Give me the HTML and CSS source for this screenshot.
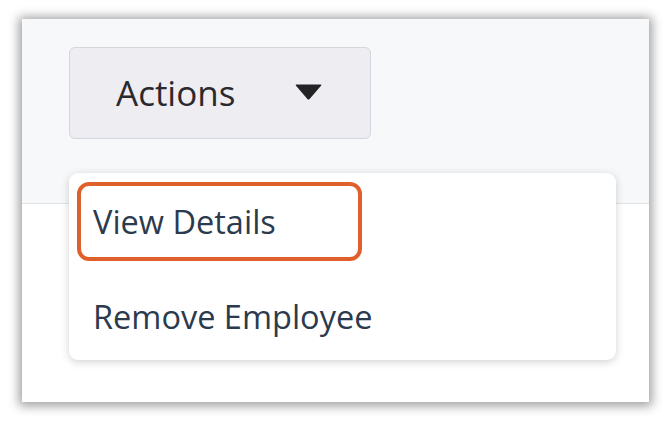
FILE: index.html
```html
<!DOCTYPE html>
<html>
<head>
<meta charset="utf-8">
<link rel="stylesheet" href="styles.css">
</head>
<body>
<div class="frame">
  <div class="header">
    <button class="actions">
      <span class="label">Actions</span>
      <svg class="caret" width="27" height="16" viewBox="0 0 27 16"><path d="M1.5 0.5 H25.5 Q27 0.5 26 1.8 L14.6 15 Q13.5 16 12.4 15 L1 1.8 Q0 0.5 1.5 0.5 Z" fill="#232326"/></svg>
    </button>
  </div>
  <div class="body"></div>
  <div class="menu">
    <div class="item selected">View Details</div>
    <div class="item">Remove Employee</div>
  </div>
</div>
</body>
</html>
```
FILE: styles.css
```css
html, body {
  margin: 0;
  padding: 0;
  background: #ffffff;
}
body {
  width: 668px;
  height: 424px;
  overflow: hidden;
  font-family: "Open Sans", "Noto Sans", sans-serif;
}
.frame {
  position: relative;
  margin: 19px 0 0 22px;
  width: 627px;
  height: 383px;
  background: #ffffff;
  box-shadow: 0 1px 10px 3px rgba(0, 0, 0, 0.38);
  overflow: visible;
}
.header {
  height: 185px;
  background: #f7f8fa;
  border-bottom: 1px solid #e1e3e7;
  padding: 28px 0 0 47px;
  box-sizing: border-box;
}
.actions {
  display: flex;
  align-items: center;
  width: 302px;
  height: 92px;
  box-sizing: border-box;
  padding: 0 0 0 46px;
  background: #eeedf2;
  border: 1.5px solid #d4d7dd;
  border-radius: 6px;
  font-family: inherit;
  cursor: pointer;
}
.label {
  font-size: 35px;
  color: #2a2a2e;
  line-height: 1;
  margin-top: -2px;
}
.caret {
  margin-left: 60px;
  margin-top: -2px;
}
.menu {
  position: absolute;
  left: 47px;
  top: 154px;
  width: 547px;
  height: 187px;
  box-sizing: border-box;
  padding: 9px 8px 0 8px;
  background: #ffffff;
  border-radius: 9px;
  box-shadow: 0 2px 8px rgba(0, 0, 0, 0.18);
  display: flex;
  flex-direction: column;
  gap: 16px;
}
.item {
  height: 79px;
  box-sizing: border-box;
  display: flex;
  align-items: center;
  padding-left: 12px;
  font-size: 32.5px;
  color: #2c3a4d;
  border: 4px solid transparent;
  border-radius: 12px;
}
.item.selected {
  width: 285px;
  border-color: #e0602c;
  padding-left: 12px;
}
```
